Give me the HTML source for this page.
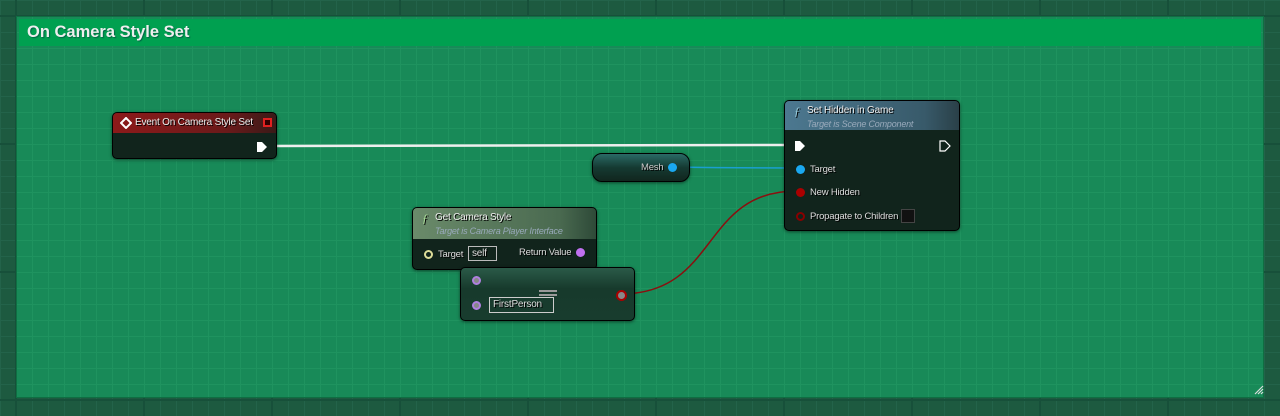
<!DOCTYPE html>
<html><head><meta charset="utf-8"><style>
*{margin:0;padding:0;box-sizing:border-box}
body{width:1280px;height:416px;overflow:hidden;position:relative;font-family:"Liberation Sans",sans-serif;
background-color:#1d5a40;
background-image:linear-gradient(#17503a 2px,transparent 2px),linear-gradient(90deg,#17503a 2px,transparent 2px),linear-gradient(#23634a 1px,transparent 1px),linear-gradient(90deg,#23634a 1px,transparent 1px);
background-size:128px 128px,128px 128px,16px 16px,16px 16px;background-position:15px 15px,15px 15px,0 0,0 0}
.cm{position:absolute;left:16px;top:16px;width:1248px;height:382px;background-color:#188a58;border:1px solid #0f6e42;
background-image:linear-gradient(#1f935f 1px,transparent 1px),linear-gradient(90deg,#1f935f 1px,transparent 1px);background-size:16px 16px;background-position:-1px -1px}
.ch{position:absolute;left:2px;top:2px;right:2px;height:27px;background:#00a050;color:#eee;font-weight:bold;font-size:16.5px;line-height:27px;padding-left:8px;text-shadow:1px 1px 1px #064;}
.n{position:absolute;background:#11241c;border:1px solid #000;border-radius:5px;box-shadow:0 1px 3px rgba(0,0,0,.5);color:#ddd;font-size:9.5px;letter-spacing:-0.2px;text-shadow:1px 1px 0 #000}
.hd{height:20px;border-radius:4px 4px 0 0;padding-left:22px;line-height:19px;color:#eee;font-size:10px;position:relative}
.sub{font-style:italic;font-weight:normal;color:#9ab;font-size:9px;position:absolute;left:22px;top:14px;text-shadow:none}
.t{position:absolute;white-space:nowrap}
.pin{position:absolute;width:9px;height:9px;border-radius:50%}
svg{position:absolute;left:0;top:0}
</style></head><body>
<div class="cm"><div class="ch">On Camera Style Set</div>
<svg width="10" height="10" style="left:1237px;top:368px"><path d="M1 9L9 1M4 9L9 4M7 9L9 7" stroke="#ddd" stroke-width="1.2"/></svg></div>

<svg width="1280" height="416">
<path d="M272 146 L792 145" stroke="#eee" stroke-width="2.5"/>
<path d="M676 167 C730 168 740 168 798 168" stroke="#1a9fd0" stroke-width="1.5" fill="none"/>
<path d="M620 294 C720 294 700 190 798 191" stroke="#8a0f0f" stroke-width="1.5" fill="none"/>
<path d="M580 252 C620 256 560 262 520 264 C480 266 440 280 475 280" stroke="#a060d0" stroke-width="1.5" fill="none"/>
</svg>

<div class="n" style="left:112px;top:112px;width:165px;height:47px">
<div class="hd" style="background:linear-gradient(90deg,#8c1a1a,#6a1a1a 70%,#3a1a18)">Event On Camera Style Set</div>
<svg width="12" height="12" style="left:7px;top:4px"><path d="M6 1L11 6L6 11L1 6Z" fill="none" stroke="#fff" stroke-width="2"/></svg>
<div style="position:absolute;left:150px;top:5px;width:9px;height:9px;border:2px solid #e02020;background:#300"></div>
<svg width="12" height="12" style="left:143px;top:28px"><path d="M1 1H6L11 6L6 11H1Z" fill="#fff"/></svg>
</div>

<div class="n" style="left:784px;top:100px;width:176px;height:131px">
<div class="hd" style="height:29px;background:linear-gradient(90deg,#4c7890,#385a6a 80%,#2a4048)">Set Hidden in Game<div class="sub">Target is Scene Component</div></div>
<span class="t" style="left:9px;top:3px;color:#9cd;font-style:italic;font-family:'Liberation Serif',serif;font-size:12px">ƒ</span>
<svg width="12" height="12" style="left:9px;top:39px"><path d="M1 1H6L11 6L6 11H1Z" fill="#fff"/></svg>
<svg width="12" height="12" style="left:154px;top:39px"><path d="M1 1H6L11 6L6 11H1Z" fill="none" stroke="#fff" stroke-width="1.2"/></svg>
<div class="pin" style="left:11px;top:64px;background:#1aa8f0"></div><span class="t" style="left:25px;top:63px">Target</span>
<div class="pin" style="left:11px;top:87px;background:#a00"></div><span class="t" style="left:25px;top:86px">New Hidden</span>
<div class="pin" style="left:11px;top:111px;border:2px solid #800"></div><span class="t" style="left:25px;top:110px">Propagate to Children</span>
<div style="position:absolute;left:116px;top:108px;width:14px;height:14px;background:#111;border:1px solid #444"></div>
</div>

<div class="n" style="left:592px;top:153px;width:98px;height:29px;border-radius:10px;background:linear-gradient(#2a6a66,#153a32 50%,#11261e)">
<span class="t" style="left:48px;top:8px;color:#ccc">Mesh</span>
<div class="pin" style="left:75px;top:9px;background:#1aa8f0"></div></div>

<div class="n" style="left:412px;top:207px;width:185px;height:63px">
<div class="hd" style="height:31px;background:linear-gradient(90deg,#6a8a6a,#4a6a50 80%,#2e4a38)">Get Camera Style<div class="sub">Target is Camera Player Interface</div></div>
<span class="t" style="left:9px;top:3px;color:#ad9;font-style:italic;font-family:'Liberation Serif',serif;font-size:12px">ƒ</span>
<div class="pin" style="left:11px;top:42px;border:2px solid #dd9"></div><span class="t" style="left:25px;top:41px">Target</span>
<div style="position:absolute;left:55px;top:38px;width:29px;height:15px;border:1px solid #bbb;color:#ddd;font-size:10px;padding-left:3px;line-height:13px">self</div>
<span class="t" style="left:106px;top:39px">Return Value</span>
<div class="pin" style="left:163px;top:40px;background:#c070f0"></div></div>

<div class="n" style="left:460px;top:267px;width:175px;height:54px;background:linear-gradient(#2a5a48,#173a2c 40%,#183c2e)">
<div class="pin" style="left:11px;top:8px;background:#888;border:2px solid #b080e0"></div>
<div class="pin" style="left:11px;top:33px;background:#888;border:2px solid #b080e0"></div>
<div class="t" style="left:78px;top:22px;width:18px;height:6px;border-top:2px solid #999;border-bottom:2px solid #999"></div>
<div style="position:absolute;left:28px;top:29px;width:65px;height:16px;border:1px solid #ccc;color:#ddd;font-size:10px;padding-left:3px;line-height:14px">FirstPerson</div>
<div class="pin" style="left:155px;top:22px;width:11px;height:11px;background:#888;border:2px solid #a00"></div></div>
</body></html>
